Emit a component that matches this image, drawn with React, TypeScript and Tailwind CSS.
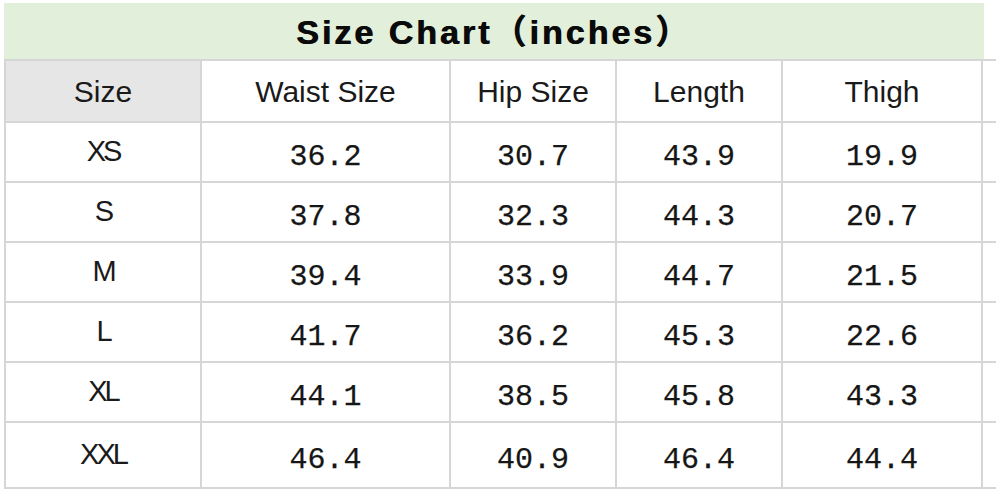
const headers = ["Waist Size", "Hip Size", "Length", "Thigh"]

const rows: [string, string, string, string, string][] = [
  ["XS", "36.2", "30.7", "43.9", "19.9"],
  ["S", "37.8", "32.3", "44.3", "20.7"],
  ["M", "39.4", "33.9", "44.7", "21.5"],
  ["L", "41.7", "36.2", "45.3", "22.6"],
  ["XL", "44.1", "38.5", "45.8", "43.3"],
  ["XXL", "46.4", "40.9", "46.4", "44.4"],
]

const sans = "font-['Liberation_Sans','Noto_Sans_CJK_SC',sans-serif]"

function NumberCell({ value }: { value: string }) {
  return (
    <div className="bg-white flex items-center justify-center pt-[10px] font-['Liberation_Mono',monospace] text-[30px] leading-none text-[#161616] [-webkit-text-stroke:0.25px_#161616]">
      {value}
    </div>
  )
}

export default function App() {
  return (
    <div className="w-[996px] h-[504px] bg-white overflow-hidden pt-[3px]">
      <div
        className={`ml-[4px] w-[980px] h-[56px] bg-[#e2efda] flex items-center justify-center pt-[2px] ${sans} text-[34px] font-bold tracking-[3px] text-[#0a0a0a]`}
        style={{ textShadow: "0.8px 0 0 #0a0a0a" }}
      >
        Size Chart（inches）
      </div>

      <div className="ml-[4px] grid grid-cols-[194px_247px_164px_164px_198px_1fr] grid-rows-[60px_58px_58px_58px_58px_58px_64px] gap-[2px] bg-[#d6d6d6] py-[2px] pl-[2px]">
        <div className={`bg-[#e6e6e6] flex items-center justify-center ${sans} text-[30px] text-[#1a1a1a]`}>
          Size
        </div>
        {headers.map((h) => (
          <div
            key={h}
            className={`bg-white flex items-center justify-center ${sans} text-[30px] text-[#1a1a1a]`}
          >
            {h}
          </div>
        ))}
        <div className="bg-white" />

        {rows.map((row) => (
          <div key={row[0]} className="contents">
            <div
              className={`bg-white flex items-center justify-center ${sans} text-[29px] tracking-[-3px] text-[#1a1a1a]`}
            >
              {row[0]}
            </div>
            {row.slice(1).map((v, i) => (
              <NumberCell key={i} value={v} />
            ))}
            <div className="bg-white" />
          </div>
        ))}
      </div>
    </div>
  )
}
